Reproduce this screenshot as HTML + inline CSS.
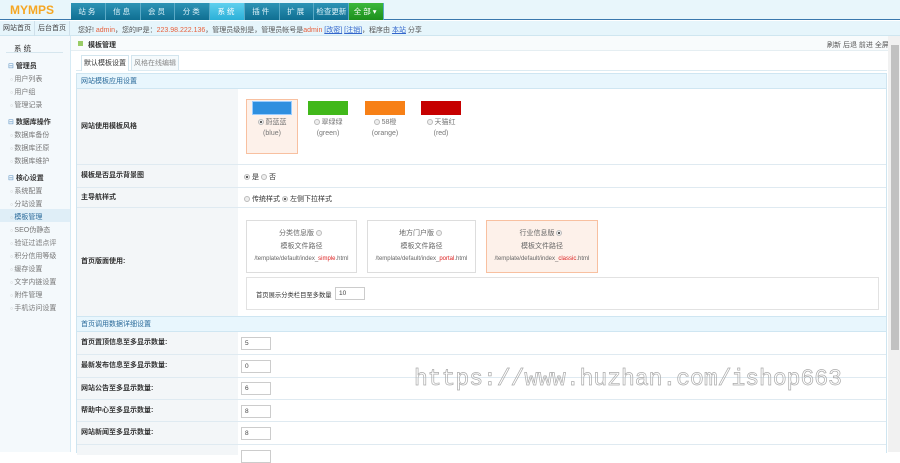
<!DOCTYPE html>
<html><head><meta charset="utf-8">
<style>
*{margin:0;padding:0;box-sizing:border-box}
body{width:900px;height:452px;overflow:hidden;background:#fff;font-family:"Liberation Sans","Noto Sans CJK SC",sans-serif;font-size:7px;color:#333;position:relative}
.a{position:absolute}
#top{left:0;top:0;width:900px;height:20px;background:#e8f6fb;border-bottom:1px solid #3a78ad}
#logo{left:10px;top:3px;font-size:12px;font-weight:bold;color:#f5a623;letter-spacing:0}
#nav{left:71px;top:3px;height:17px;width:313px;display:flex}
#nav div{width:34.8px;height:17px;line-height:17px;text-align:center;color:#dff3fa;font-size:7.5px;letter-spacing:2px;background:linear-gradient(#2d93b5,#0f6f92);border-right:1px solid #5aaac6}
#nav div.on{background:linear-gradient(#5fd0ee,#2bb0d8);color:#fff}
#nav div.g{background:linear-gradient(#3cb83c,#1c8f1c);color:#fff}
#bar2{left:0;top:21px;width:900px;height:15px;background:#e6f5fb;border-bottom:1px solid #cfe6f0}
.b2{top:21px;height:15px;line-height:15px;width:35px;text-align:center;border-right:1px solid #cfe0ea;color:#444}
#side{left:0;top:36px;width:71px;height:416px;background:#f4f9fc;border-right:1px solid #d6eaf4}
.sh{left:8px;font-weight:bold;color:#333}
.sh:before{content:"⊟ ";color:#5a8fc0;font-weight:normal}
.si{left:10px;color:#777}
.si:before{content:"○ ";color:#bbb;font-size:5px}
#hdr{left:71px;top:36px;width:817px;height:15px;background:#f8fbfc;border-bottom:1px solid #e5eef2}
.tab{top:55px;height:15px;line-height:15px;border:1px solid #d3e5ee;border-bottom:none;text-align:center;background:#f5fafc;color:#888}
#box{left:76px;top:73px;width:811px;height:380px;border:1px solid #cfe5f0;border-bottom:none}
.sec{left:77px;width:809px;height:16px;line-height:16px;background:#e8f6fd;border-top:1px solid #cfe6f2;border-bottom:1px solid #cfe6f2;padding-left:4px;color:#2a6a9a}
.lab{left:77px;width:161px;background:#f3f6f8;padding-left:4px;font-weight:bold;color:#333}
.row{left:77px;width:809px;border-bottom:1px solid #dfeaf1}
.sw{top:98px;width:56px;text-align:center;color:#777}
.sw i{display:block;width:40px;height:14px;margin:3px auto 2px}
.r{display:inline-block;width:6px;height:6px;border-radius:50%;border:1px solid #bbb;background:#eee;vertical-align:middle;margin-right:2px}
.r.on{background:radial-gradient(#555 35%,#eee 45%)}
.card{top:220px;height:53px;border:1px solid #ddd;text-align:center;color:#666;line-height:12.5px;padding-top:7px;white-space:nowrap}
.card .p{font-size:6px}
.card.on{background:#fdf1ea;border-color:#f8c0a0}
.red{color:#d22}
.inp{left:241px;width:30px;height:13px;border:1px solid #ccc;line-height:11px;padding-left:3px;font-size:6.5px;color:#444;background:#fff}
#wm{left:414px;top:366px;font-family:"Liberation Mono","DejaVu Sans Mono",monospace;font-size:23px;color:transparent;-webkit-text-stroke:0.7px #aaa;letter-spacing:0;white-space:nowrap}
#sb{left:888px;top:36px;width:12px;height:416px;background:#f1f1f1}
#thumb{left:891px;top:45px;width:8px;height:305px;background:#c1c1c1}
</style></head><body>
<div id="top" class="a"></div>
<div id="logo" class="a">MYMPS</div>
<div id="nav" class="a"><div>站务</div><div>信息</div><div>会员</div><div>分类</div><div class="on">系统</div><div>插件</div><div>扩展</div><div style="letter-spacing:0">检查更新</div><div class="g">全部▾</div></div>
<div id="bar2" class="a"></div>
<div class="a b2" style="left:0">网站首页</div><div class="a b2" style="left:35px">后台首页</div>
<div class="a" style="left:78px;top:25px;color:#555">您好! <span style="color:#e8603c">admin</span>，您的IP是：<span style="color:#e8603c">223.98.222.136</span>，管理员级别是，管理员帐号是<span style="color:#e8603c">admin</span> <u style="color:#36c">[改密]</u> <u style="color:#36c">[注销]</u>，程序由 <u style="color:#36c">本站</u> 分享</div>
<div id="side" class="a"></div>
<div class="a" style="left:14px;top:43px;font-size:7.5px;color:#333">系 统</div>
<div class="a" style="left:6px;top:52px;width:57px;height:1px;background:#d6e6ee"></div>
<div class="a sh" style="top:61px">管理员</div>
<div class="a si" style="top:74px">用户列表</div><div class="a si" style="top:87px">用户组</div><div class="a si" style="top:100px">管理记录</div>
<div class="a sh" style="top:117px">数据库操作</div>
<div class="a si" style="top:130px">数据库备份</div><div class="a si" style="top:143px">数据库还原</div><div class="a si" style="top:156px">数据库维护</div>
<div class="a sh" style="top:173px">核心设置</div>
<div class="a si" style="top:186px">系统配置</div><div class="a si" style="top:199px">分站设置</div>
<div class="a" style="left:0;top:209px;width:70px;height:13px;background:#dfeef7"></div>
<div class="a si" style="top:212px;color:#2a6a9a">模板管理</div>
<div class="a si" style="top:225px">SEO伪静态</div><div class="a si" style="top:238px">验证过滤点评</div><div class="a si" style="top:251px">积分信用等级</div><div class="a si" style="top:264px">缓存设置</div><div class="a si" style="top:277px">文字内链设置</div><div class="a si" style="top:290px">附件管理</div><div class="a si" style="top:303px">手机访问设置</div>
<div id="hdr" class="a"></div>
<div class="a" style="left:78px;top:41px;width:5px;height:5px;background:#9c6"></div>
<div class="a" style="left:88px;top:40px;font-weight:bold">模板管理</div>
<div class="a" style="left:827px;top:40px;color:#555">刷新 后退 前进 全屏</div>
<div class="a" style="left:76px;top:70px;width:811px;height:1px;background:#dcebf2"></div>
<div class="a tab" style="left:81px;width:48px;background:#fff;color:#333;height:16px">默认模板设置</div>
<div class="a tab" style="left:131px;width:48px">风格在线编辑</div>
<div id="box" class="a"></div>
<div class="a sec" style="top:73px">网站模板应用设置</div>
<div class="a row" style="top:89px;height:76px"></div>
<div class="a lab" style="top:89px;height:75px;line-height:75px">网站使用模板风格</div>
<div class="a" style="left:246px;top:99px;width:52px;height:55px;background:#fdf1ea;border:1px solid #f8c0a0"></div>
<div class="a sw" style="left:244px"><i style="background:#2f8fdf;border:1px solid #9cf"></i><span class="r on"></span>蔚蓝蓝<br><span style="line-height:14px">(blue)</span></div>
<div class="a sw" style="left:300px"><i style="background:#41b81a"></i><span class="r"></span>翠绿绿<br><span style="line-height:14px">(green)</span></div>
<div class="a sw" style="left:357px"><i style="background:#f78016"></i><span class="r"></span>58橙<br><span style="line-height:14px">(orange)</span></div>
<div class="a sw" style="left:413px"><i style="background:#c60000"></i><span class="r"></span>天猫红<br><span style="line-height:14px">(red)</span></div>
<div class="a row" style="top:165px;height:23px"></div>
<div class="a lab" style="top:165px;height:22px;line-height:22px">模板是否显示背景图</div>
<div class="a" style="left:244px;top:172px"><span class="r on"></span>是 <span class="r"></span>否</div>
<div class="a row" style="top:188px;height:20px"></div>
<div class="a lab" style="top:188px;height:19px;line-height:19px">主导航样式</div>
<div class="a" style="left:244px;top:194px"><span class="r"></span>传统样式 <span class="r on"></span>左侧下拉样式</div>
<div class="a row" style="top:208px;height:109px"></div>
<div class="a lab" style="top:208px;height:108px;line-height:108px">首页版面使用:</div>
<div class="a card" style="left:246px;width:111px">分类信息版 <span class="r"></span><br>模板文件路径<br><span class="p">/template/default/index_<span class="red">simple</span>.html</span></div>
<div class="a card" style="left:367px;width:109px">地方门户版 <span class="r"></span><br>模板文件路径<br><span class="p">/template/default/index_<span class="red">portal</span>.html</span></div>
<div class="a card on" style="left:486px;width:112px">行业信息版 <span class="r on"></span><br>模板文件路径<br><span class="p">/template/default/index_<span class="red">classic</span>.html</span></div>
<div class="a" style="left:246px;top:277px;width:633px;height:33px;border:1px solid #e2e2e2"></div>
<div class="a" style="left:256px;top:290px;color:#333;font-size:6.3px">首页展示分类栏目至多数量</div>
<div class="a inp" style="left:335px;top:287px">10</div>
<div class="a sec" style="top:316px">首页调用数据详细设置</div>
<div class="a row" style="top:332px;height:23px"></div><div class="a lab" style="top:332px;height:22px;line-height:22px">首页置顶信息至多显示数量:</div><div class="a inp" style="top:337px">5</div>
<div class="a row" style="top:355px;height:23px"></div><div class="a lab" style="top:355px;height:22px;line-height:22px">最新发布信息至多显示数量:</div><div class="a inp" style="top:360px">0</div>
<div class="a row" style="top:378px;height:22px"></div><div class="a lab" style="top:378px;height:21px;line-height:21px">网站公告至多显示数量:</div><div class="a inp" style="top:382px">6</div>
<div class="a row" style="top:400px;height:22px"></div><div class="a lab" style="top:400px;height:21px;line-height:21px">帮助中心至多显示数量:</div><div class="a inp" style="top:405px">8</div>
<div class="a row" style="top:422px;height:23px"></div><div class="a lab" style="top:422px;height:22px;line-height:22px">网站新闻至多显示数量:</div><div class="a inp" style="top:427px">8</div>
<div class="a lab" style="top:445px;height:10px"></div><div class="a inp" style="top:450px"></div>
<div id="wm" class="a">https://www.huzhan.com/ishop663</div>
<div id="sb" class="a"></div><div id="thumb" class="a"></div>
</body></html>
